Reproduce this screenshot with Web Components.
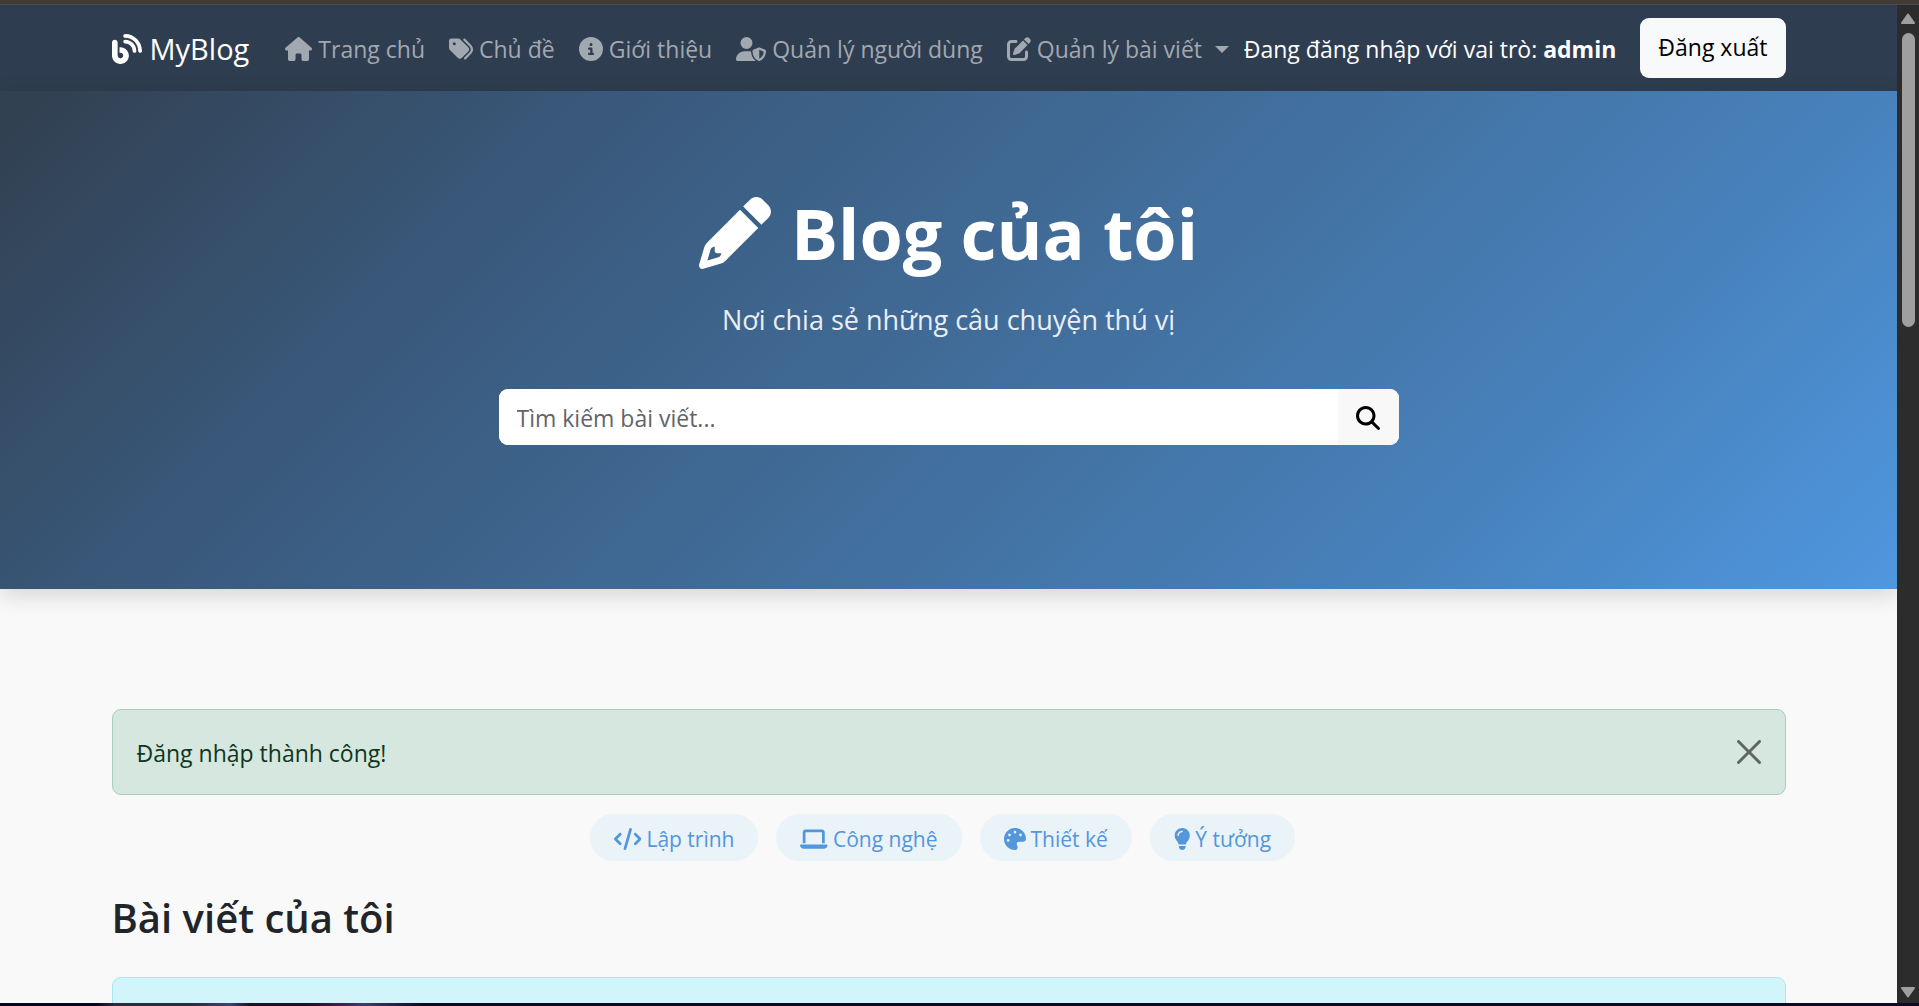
<!DOCTYPE html>
<html lang="vi">
<head>
<meta charset="utf-8">
<title>MyBlog</title>
<style>
  html, body { margin: 0; height: 100%; }
  body { overflow: hidden; font-family: "Open Sans", "Noto Sans", sans-serif; font-size: 23px; line-height: 36px; color: #212529; }
</style>
</head>
<body>
<blog-window>
  <blog-navbar></blog-navbar>
  <blog-hero></blog-hero>
  <blog-container>
    <blog-alert>Đăng nhập thành công!</blog-alert>
    <blog-tags>
      <blog-tag icon="code">Lập trình</blog-tag>
      <blog-tag icon="laptop">Công nghệ</blog-tag>
      <blog-tag icon="palette">Thiết kế</blog-tag>
      <blog-tag icon="bulb">Ý tưởng</blog-tag>
    </blog-tags>
    <blog-heading>Bài viết của tôi</blog-heading>
    <blog-panel></blog-panel>
  </blog-container>
</blog-window>
<script>
const ICONS = {
  blog: [512, "M192 32c0 17.700 14.300 32 32 32c123.700 0 224 100.300 224 224c0 17.700 14.300 32 32 32s32-14.300 32-32C512 128.900 383.100 0 224 0c-17.700 0-32 14.300-32 32zm0 96c0 17.700 14.300 32 32 32c70.700 0 128 57.300 128 128c0 17.700 14.300 32 32 32s32-14.300 32-32c0-106-86-192-192-192c-17.700 0-32 14.300-32 32zM96 144c0-26.500-21.500-48-48-48S0 117.500 0 144V368c0 79.500 64.500 144 144 144s144-64.500 144-144s-64.500-144-144-144H128v96h16c26.500 0 48 21.500 48 48s-21.500 48-48 48s-48-21.500-48-48V144z"],
  home: [576, "M575.8 255.500c0 18-15 32.100-32 32.100h-32l.7 160.200c0 2.700-.2 5.400-.5 8.100V472c0 22.100-17.900 40-40 40H456c-1.100 0-2.200 0-3.300-.1c-1.400 .1-2.800 .1-4.200 .1H416 392c-22.100 0-40-17.900-40-40V448 384c0-17.700-14.300-32-32-32H256c-17.700 0-32 14.300-32 32v64 24c0 22.100-17.900 40-40 40H160 128.100c-1.500 0-3-.1-4.500-.2c-1.200 .1-2.400 .2-3.600 .2H104c-22.100 0-40-17.900-40-40V360c0-.9 0-1.900 .1-2.800V287.600H32c-18 0-32-14-32-32.100c0-9 3-17 10-24L266.400 8c7-7 15-8 22-8s15 2 21 7L564.800 231.500c8 7 12 15 11 24z"],
  tags: [512, "M345 39.100L472.800 168.400c52.400 53 52.400 138.200 0 191.200L360.800 472.900c-9.300 9.400-24.500 9.500-33.900 .2s-9.500-24.500-.2-33.900L438.600 325.900c33.900-34.300 33.900-89.400 0-123.700L310.900 72.900c-9.300-9.400-9.200-24.600 .2-33.900s24.600-9.200 33.900 .2zM0 229.500V80C0 53.500 21.500 32 48 32H197.500c17 0 33.300 6.700 45.300 18.700l168 168c25 25 25 65.500 0 90.500L277.300 442.700c-25 25-65.500 25-90.500 0l-168-168C6.700 262.700 0 246.500 0 229.500zM144 144a32 32 0 1 0 -64 0 32 32 0 1 0 64 0z"],
  info: [512, "M256 512A256 256 0 1 0 256 0a256 256 0 1 0 0 512zM216 336h24V272H216c-13.300 0-24-10.700-24-24s10.700-24 24-24h48c13.300 0 24 10.700 24 24v88h8c13.300 0 24 10.700 24 24s-10.700 24-24 24H216c-13.300 0-24-10.700-24-24s10.700-24 24-24zm40-208a32 32 0 1 1 0 64 32 32 0 1 1 0-64z"],
  shield: [640, "M224 256A128 128 0 1 0 224 0a128 128 0 1 0 0 256zm-45.700 48C79.800 304 0 383.800 0 482.300C0 498.700 13.300 512 29.700 512H418.300c1.800 0 3.500-.2 5.300-.5c-76.300-55.100-99.800-141-103.100-200.200c-16.100-4.800-33.100-7.300-50.700-7.300H178.300zm308.800-78.300l-120 48C358 277.400 352 286.200 352 296c0 63.300 25.900 168.800 134.800 214.200c5.900 2.500 12.600 2.500 18.500 0C614.100 464.800 640 359.300 640 296c0-9.800-6-18.600-15.100-22.300l-120-48c-5.700-2.300-12.100-2.300-17.800 0zM591.400 312c-3.900 50.700-27.200 116.700-95.400 149.700V273.800L591.400 312z"],
  edit: [512, "M471.600 21.700c-21.900-21.900-57.300-21.900-79.200 0L362.300 51.700l97.900 97.900 30.100-30.100c21.900-21.900 21.900-57.300 0-79.200L471.600 21.700zm-299.200 220c-6.100 6.100-10.800 13.600-13.500 21.900l-29.600 88.800c-2.900 8.600-.6 18.100 5.800 24.600s15.900 8.700 24.600 5.800l88.800-29.600c8.200-2.700 15.700-7.400 21.900-13.500L437.700 172.300 339.700 74.300 172.400 241.700zM96 64C43 64 0 107 0 160V416c0 53 43 96 96 96H352c53 0 96-43 96-96V320c0-17.700-14.300-32-32-32s-32 14.300-32 32v96c0 17.700-14.300 32-32 32H96c-17.700 0-32-14.300-32-32V160c0-17.700 14.300-32 32-32h96c17.700 0 32-14.300 32-32s-14.300-32-32-32H96z"],
  pencil: [512, "M410.300 231l11.300-11.300-33.900-33.900-62.100-62.100L291.700 89.800l-11.300 11.300-22.600 22.600L58.600 322.900c-10.400 10.400-18 23.300-22.200 37.400L1 480.700c-2.500 8.400-.2 17.500 6.100 23.700s15.300 8.500 23.700 6.100l120.300-35.400c14.100-4.200 27-11.800 37.400-22.200L387.700 253.700 410.300 231zM160 399.400l-9.100 22.700c-4 3.100-8.500 5.400-13.300 6.900L59.400 452l23-78.100c1.400-4.900 3.800-9.400 6.900-13.300l22.700-9.100v32c0 8.800 7.200 16 16 16h32zM362.700 18.700L348.300 33.200 325.700 55.800 314.300 67.100l33.900 33.900 62.100 62.100 33.900 33.900 11.300-11.300 22.600-22.600 14.500-14.500c25-25 25-65.500 0-90.500L453.300 18.700c-25-25-65.500-25-90.500 0z"],
  search: [512, "M416 208c0 45.900-14.900 88.300-40 122.700L502.600 457.400c12.500 12.500 12.500 32.800 0 45.300s-32.800 12.500-45.300 0L330.700 376c-34.400 25.200-76.800 40-122.700 40C93.100 416 0 322.900 0 208S93.100 0 208 0S416 93.100 416 208zM208 352a144 144 0 1 0 0-288 144 144 0 1 0 0 288z"],
  code: [640, "M392.800 1.200c-17-4.900-34.700 5-39.600 22l-128 448c-4.900 17 5 34.700 22 39.600s34.700-5 39.600-22l128-448c4.900-17-5-34.700-22-39.600zm80.600 120.100c-12.500 12.500-12.500 32.800 0 45.300L562.700 256l-89.400 89.400c-12.500 12.500-12.500 32.800 0 45.300s32.800 12.500 45.300 0l112-112c12.500-12.500 12.500-32.800 0-45.300l-112-112c-12.500-12.500-32.800-12.500-45.300 0zm-306.700 0c-12.500-12.500-32.800-12.500-45.300 0l-112 112c-12.500 12.500-12.500 32.800 0 45.300l112 112c12.500 12.500 32.800 12.500 45.300 0s12.500-32.800 0-45.300L77.300 256l89.400-89.400c12.500-12.500 12.500-32.800 0-45.300z"],
  laptop: [640, "M128 32C92.700 32 64 60.700 64 96V352h64V96H512V352h64V96c0-35.300-28.700-64-64-64H128zM19.200 384C8.600 384 0 392.600 0 403.200C0 445.600 34.400 480 76.800 480H563.200c42.400 0 76.800-34.400 76.800-76.800c0-10.600-8.600-19.200-19.200-19.200H19.200z"],
  palette: [512, "M512 256c0 .9 0 1.800 0 2.700c-.4 36.500-33.600 61.300-70.100 61.300H344c-26.500 0-48 21.500-48 48c0 3.400 .4 6.700 1 9.900c2.100 10.200 6.500 20 10.800 29.900c6.100 13.800 12.100 27.500 12.100 42c0 31.800-21.600 60.700-53.400 62c-3.500 .1-7 .2-10.600 .2C114.600 512 0 397.400 0 256S114.600 0 256 0S512 114.600 512 256zM128 288a32 32 0 1 0 -64 0 32 32 0 1 0 64 0zm0-96a32 32 0 1 0 0-64 32 32 0 1 0 0 64zM288 96a32 32 0 1 0 -64 0 32 32 0 1 0 64 0zm96 96a32 32 0 1 0 0-64 32 32 0 1 0 0 64z"],
  bulb: [384, "M272 384c9.600-31.900 29.500-59.100 49.200-86.200l0 0c5.200-7.100 10.400-14.200 15.400-21.400c19.800-28.500 31.400-63 31.400-100.300C368 78.800 289.200 0 192 0S16 78.800 16 176c0 37.300 11.600 71.900 31.400 100.300c5 7.200 10.200 14.300 15.400 21.400l0 0c19.800 27.100 39.700 54.400 49.200 86.200H272zM192 512c44.200 0 80-35.800 80-80V416H112v16c0 44.200 35.800 80 80 80zM112 176c0 8.800-7.200 16-16 16s-16-7.200-16-16c0-61.900 50.100-112 112-112c8.800 0 16 7.200 16 16s-7.200 16-16 16c-44.200 0-80 35.800-80 80z"]
};

function define(name, html) {
  customElements.define(name, class extends HTMLElement {
    constructor() {
      super();
      this.attachShadow({ mode: "open" }).innerHTML = html;
    }
  });
}

customElements.define("blog-icon", class extends HTMLElement {
  connectedCallback() {
    if (this.shadowRoot) return;
    const [width, path] = ICONS[this.getAttribute("name")];
    this.attachShadow({ mode: "open" }).innerHTML = `
      <style>:host { display: inline-flex; flex: none; } svg { display: block; height: var(--icon-size, 24px); fill: currentColor; }</style>
      <svg viewBox="0 0 ${width} 512" aria-hidden="true"><path d="${path}"/></svg>`;
  }
});

define("blog-window", `
  <style>
    :host { display: flex; flex-direction: column; height: 100vh; background: #f8f9fa; }
    .top { flex: none; height: 4px; background: #433c34; border-bottom: 1px solid #4a4a4a; }
    .bottom { flex: none; height: 3px; background: linear-gradient(90deg, #05071f 0 5%, #2e2a3e 6% 10%, #3d4270 12%, #1c1226 13% 16%, #430f3a 17%, #3d3a72 19%, #0b0c24 22% 100%); }
    .view { flex: 1; min-height: 0; display: flex; }
    .page { flex: 1; min-width: 0; overflow: hidden; background: #f9f9f9; }
    .bar { flex: none; width: 22px; background: #2c2c2c; display: flex; flex-direction: column; align-items: center; padding: 8px 0 5px; box-sizing: border-box; gap: 9px; }
    .thumb { width: 13px; height: 294px; border-radius: 7px; background: #9f9f9f; }
    .bar svg { display: block; width: 14px; height: 11px; fill: #9f9f9f; stroke: #9f9f9f; stroke-width: 2; stroke-linejoin: round; }
    .bar svg:last-child { margin-top: auto; }
  </style>
  <div class="top"></div>
  <div class="view">
    <main class="page"><slot></slot></main>
    <div class="bar" aria-hidden="true">
      <svg viewBox="0 0 14 11"><path d="M7 1.500 13 10H1z"/></svg>
      <div class="thumb"></div>
      <svg viewBox="0 0 14 11"><path d="M7 9.500 13 1H1z"/></svg>
    </div>
  </div>
  <div class="bottom"></div>`);

define("blog-nav-link", `
  <style>
    :host { display: block; }
    a { display: flex; align-items: center; gap: 6px; padding: 12px; color: #a2a8b0; text-decoration: none; white-space: nowrap; }
  </style>
  <a href="#"><slot></slot></a>`);

define("blog-navbar", `
  <style>
    :host { display: block; background: #2f3d50; }
    nav { box-sizing: border-box; max-width: 1710px; margin: 0 auto; padding: 14px 18px 12px; display: flex; align-items: center; min-height: 85px; }
    .brand { display: flex; align-items: center; gap: 8px; margin-right: 24px; font-size: 29px; color: #fff; text-decoration: none; --icon-size: 30px; }
    .links, .user { display: flex; align-items: center; }
    .caret { border: 7px solid transparent; border-top-color: currentColor; border-bottom: 0; margin-left: 7px; }
    .user { margin: -2px 0 0 auto; gap: 24px; color: #fff; white-space: nowrap; }
    .user span { padding-top: 2px; }
    button { font: inherit; height: 60px; padding: 0 18px 2px; border: 0; border-radius: 9px; background: #f8f9fa; color: #000; }
  </style>
  <nav>
    <a class="brand" href="#"><blog-icon name="blog"></blog-icon>MyBlog</a>
    <div class="links">
      <blog-nav-link><blog-icon name="home"></blog-icon>Trang chủ</blog-nav-link>
      <blog-nav-link><blog-icon name="tags"></blog-icon>Chủ đề</blog-nav-link>
      <blog-nav-link><blog-icon name="info"></blog-icon>Giới thiệu</blog-nav-link>
      <blog-nav-link><blog-icon name="shield"></blog-icon>Quản lý người dùng</blog-nav-link>
      <blog-nav-link><blog-icon name="edit"></blog-icon>Quản lý bài viết<span class="caret"></span></blog-nav-link>
    </div>
    <div class="user">
      <span>Đang đăng nhập với vai trò: <strong>admin</strong></span>
      <button type="button">Đăng xuất</button>
    </div>
  </nav>`);

define("blog-hero", `
  <style>
    :host { display: block; box-sizing: border-box; min-height: 498px; padding: 98px 18px; text-align: center; color: #fff;
      background: linear-gradient(135deg, #313f4f, #39587a 25%, #416d9a 52%, #4781bb 78%, #4f97df); box-shadow: 0 6px 22px rgba(0, 0, 0, .15); }
    h1 { display: flex; justify-content: center; align-items: center; gap: 20px; margin: 0 0 20px; font-size: 70px; font-weight: 700; line-height: 88px; --icon-size: 72px; }
    p { margin: 0 0 47px; font-size: 27px; line-height: 45px; color: #e9eef4; }
    form { display: flex; max-width: 900px; margin: 0 auto; height: 56px; border-radius: 9px; overflow: hidden; background: #fff; }
    input { flex: 1; min-width: 0; border: 0; padding: 2px 18px 0; font: inherit; background: #fff; color: #212529; outline: none; }
    input::placeholder { color: #5f6469; opacity: 1; }
    button { width: 61px; border: 0; padding: 2px 0 0; background: #f8f8f8; color: #000; display: flex; align-items: center; justify-content: center; }
  </style>
  <h1><blog-icon name="pencil"></blog-icon>Blog của tôi</h1>
  <p>Nơi chia sẻ những câu chuyện thú vị</p>
  <form role="search">
    <input type="text" placeholder="Tìm kiếm bài viết..." aria-label="Tìm kiếm bài viết">
    <button type="button" aria-label="Tìm kiếm"><blog-icon name="search"></blog-icon></button>
  </form>`);

define("blog-container", `
  <style>:host { display: block; box-sizing: border-box; max-width: 1710px; margin: 0 auto; padding: 120px 18px 0; }</style>
  <slot></slot>`);

define("blog-alert", `
  <style>
    :host { display: flex; align-items: center; justify-content: space-between; box-sizing: border-box; min-height: 86px; padding: 0 24px;
      border: 1px solid #a9cfbc; border-radius: 9px; background: #d5e7de; color: #0f3622; }
    span { padding-top: 2px; }
    button { border: 0; padding: 0; background: none; display: flex; color: #000; opacity: .55; }
    svg { width: 24px; height: 24px; fill: currentColor; }
  </style>
  <span><slot></slot></span>
  <button type="button" aria-label="Đóng"><svg viewBox="0 0 16 16"><path d="M.293.293a1 1 0 0 1 1.414 0L8 6.586 14.293.293a1 1 0 1 1 1.414 1.414L9.414 8l6.293 6.293a1 1 0 0 1-1.414 1.414L8 9.414l-6.293 6.293a1 1 0 0 1-1.414-1.414L6.586 8 .293 1.707a1 1 0 0 1 0-1.414z"/></svg></button>`);

define("blog-tags", `
  <style>:host { display: flex; justify-content: center; gap: 18px; margin: 19px 12px 0 0; }</style>
  <slot></slot>`);

customElements.define("blog-tag", class extends HTMLElement {
  constructor() {
    super();
    this.attachShadow({ mode: "open" }).innerHTML = `
      <style>
        :host { display: block; --icon-size: 22px; }
        a { box-sizing: border-box; display: flex; align-items: center; gap: 5px; height: 47px; padding: 2px 24px 0; border-radius: 24px; background: #e9f3f8; color: #5396dc; font-size: 21px; text-decoration: none; white-space: nowrap; }
      </style>
      <a href="#"><blog-icon name="${this.getAttribute("icon")}"></blog-icon><slot></slot></a>`;
  }
});

define("blog-heading", `
  <style>
    :host { display: block; }
    h2 { margin: 31px 0 33px; font-size: 40px; line-height: 52px; font-weight: 600; color: #212529; }
  </style>
  <h2><slot></slot></h2>`);

define("blog-panel", `
  <style>:host { display: block; height: 120px; border: 1px solid #a6e9f2; border-radius: 9px; background: #d2f4fb; }</style>`);
</script>
</body>
</html>
